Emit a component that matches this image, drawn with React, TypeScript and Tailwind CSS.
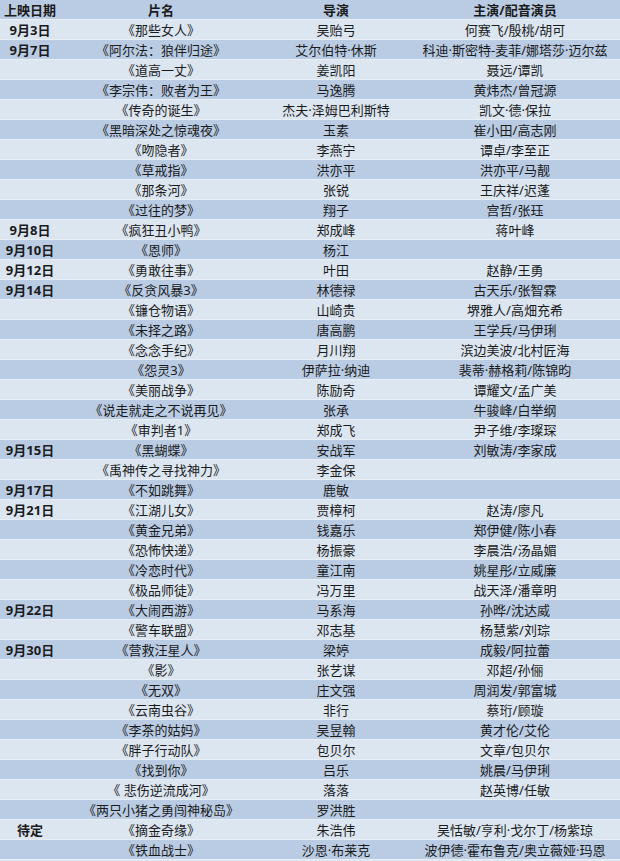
import React from "react";

type Row = [string, string, string, string];

const rows: Row[] = [
  ["9月3日", "《那些女人》", "吴贻弓", "何赛飞/殷桃/胡可"],
  ["9月7日", "《阿尔法：狼伴归途》", "艾尔伯特·休斯", "科迪·斯密特-麦菲/娜塔莎·迈尔兹"],
  ["", "《道高一丈》", "姜凯阳", "聂远/谭凯"],
  ["", "《李宗伟：败者为王》", "马逸腾", "黄炜杰/曾冠源"],
  ["", "《传奇的诞生》", "杰夫·泽姆巴利斯特", "凯文·德·保拉"],
  ["", "《黑暗深处之惊魂夜》", "玉素", "崔小田/高志刚"],
  ["", "《吻隐者》", "李燕宁", "谭卓/李至正"],
  ["", "《草戒指》", "洪亦平", "洪亦平/马靓"],
  ["", "《那条河》", "张锐", "王庆祥/迟蓬"],
  ["", "《过往的梦》", "翔子", "宫哲/张珏"],
  ["9月8日", "《疯狂丑小鸭》", "郑成峰", "蒋叶峰"],
  ["9月10日", "《恩师》", "杨江", ""],
  ["9月12日", "《勇敢往事》", "叶田", "赵静/王勇"],
  ["9月14日", "《反贪风暴3》", "林德禄", "古天乐/张智霖"],
  ["", "《镰仓物语》", "山崎贵", "堺雅人/高畑充希"],
  ["", "《未择之路》", "唐高鹏", "王学兵/马伊琍"],
  ["", "《念念手纪》", "月川翔", "滨边美波/北村匠海"],
  ["", "《怨灵3》", "伊萨拉·纳迪", "裴蒂·赫格莉/陈锦昀"],
  ["", "《美丽战争》", "陈励奇", "谭耀文/孟广美"],
  ["", "《说走就走之不说再见》", "张承", "牛骏峰/白举纲"],
  ["", "《审判者1》", "郑成飞", "尹子维/李璨琛"],
  ["9月15日", "《黑蝴蝶》", "安战军", "刘敏涛/李家成"],
  ["", "《禹神传之寻找神力》", "李金保", ""],
  ["9月17日", "《不如跳舞》", "鹿敏", ""],
  ["9月21日", "《江湖儿女》", "贾樟柯", "赵涛/廖凡"],
  ["", "《黄金兄弟》", "钱嘉乐", "郑伊健/陈小春"],
  ["", "《恐怖快递》", "杨振豪", "李晨浩/汤晶媚"],
  ["", "《冷恋时代》", "童江南", "姚星彤/立威廉"],
  ["", "《极品师徒》", "冯万里", "战天泽/潘章明"],
  ["9月22日", "《大闹西游》", "马系海", "孙晔/沈达威"],
  ["", "《警车联盟》", "邓志基", "杨慧紫/刘琮"],
  ["9月30日", "《营救汪星人》", "梁婷", "成毅/阿拉蕾"],
  ["", "《影》", "张艺谋", "邓超/孙俪"],
  ["", "《无双》", "庄文强", "周润发/郭富城"],
  ["", "《云南虫谷》", "非行", "蔡珩/顾璇"],
  ["", "《李茶的姑妈》", "吴昱翰", "黄才伦/艾伦"],
  ["", "《胖子行动队》", "包贝尔", "文章/包贝尔"],
  ["", "《找到你》", "吕乐", "姚晨/马伊琍"],
  ["", "《 悲伤逆流成河》", "落落", "赵英博/任敏"],
  ["", "《两只小猪之勇闯神秘岛》", "罗洪胜", ""],
  ["待定", "《摘金奇缘》", "朱浩伟", "吴恬敏/亨利·戈尔丁/杨紫琼"],
  ["", "《铁血战士》", "沙恩·布莱克", "波伊德·霍布鲁克/奥立薇娅·玛恩"],
];

const grid = "grid grid-cols-[60px_202px_148px_210px] h-[20px] items-center text-center leading-[20px] whitespace-nowrap border-b border-[#e9eff7]";

export default function App() {
  return (
    <div className="w-[620px] h-[861px] overflow-hidden bg-[#dce6f1] text-[13px] text-[#1b1b1b] font-['Noto_Sans','Noto_Sans_CJK_SC',sans-serif]">
      <div className={`${grid} bg-[#b9cce4] font-bold`}>
        <div>上映日期</div>
        <div>片名</div>
        <div>导演</div>
        <div>主演/配音演员</div>
      </div>
      {rows.map((r, i) => (
        <div key={i} className={`${grid} ${i % 2 === 0 ? "bg-[#dce6f1]" : "bg-[#b9cce4]"}`}>
          <div className="font-bold">{r[0]}</div>
          <div>{r[1]}</div>
          <div>{r[2]}</div>
          <div>{r[3]}</div>
        </div>
      ))}
    </div>
  );
}
